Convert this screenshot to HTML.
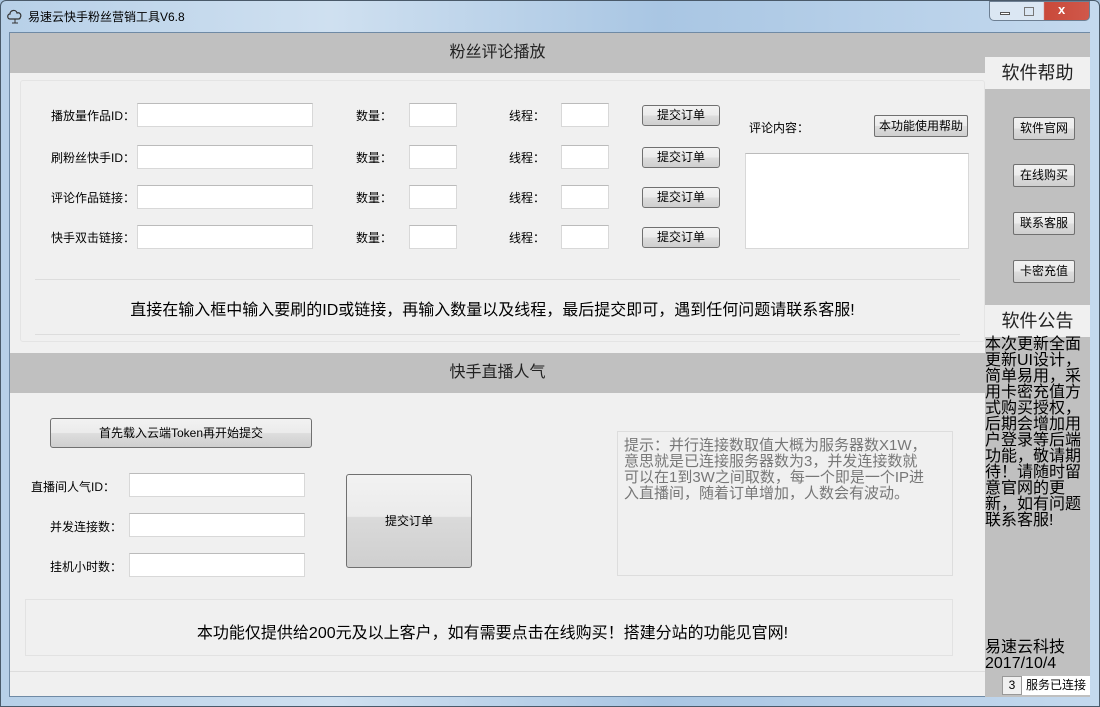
<!DOCTYPE html>
<html><head><meta charset="utf-8"><style>
*{margin:0;padding:0;box-sizing:border-box}
body{width:1100px;height:707px;overflow:hidden;background:#a9c4df;font-family:"Liberation Sans","Noto Sans CJK SC","WenQuanYi Zen Hei",sans-serif;font-size:12px;color:#000;position:relative}
.a{position:absolute}
.frame{left:0;top:0;width:1100px;height:707px;background:linear-gradient(90deg,#b7d0e8,#cfe0f0 30%,#a9c6e3 60%,#c4d9ee);border:1px solid #4a5a6a;border-radius:6px 6px 0 0}
.client{left:9px;top:32px;width:1081px;height:665px;background:#f0f0f0;border:1px solid #6f8aa5}
.band{background:#c0c0c0;text-align:center;font-size:16px;color:#222}
.inp{background:#fff;border:1px solid #d8d8d8;border-top-color:#bbb}
.btn{border:1px solid #707070;border-radius:3px;background:linear-gradient(#f2f2f2 0,#ebebeb 50%,#dddddd 51%,#cfcfcf 100%);text-align:center;font-size:12px}
.lbl{font-size:12px;text-align:right}
.sb{background:#c0c0c0}
.wh{background:#f0f0f0;font-size:18px;text-align:center;color:#222}
</style></head><body>
<div class="a frame"></div>
<svg class="a" style="left:6px;top:8px" width="18" height="16" viewBox="0 0 18 16"><path d="M4 11 C1 11 1 6 4 6 C4 2 10 1 11 5 C14 4 16 7 14 10 C14 11 13 11 12 11 Z" fill="none" stroke="#333" stroke-width="1.2"/><path d="M9 11 V15 M6 15 H12" stroke="#333"/></svg>
<div class="a" style="left:28px;top:8px;font-size:12px">易速云快手粉丝营销工具V6.8</div>
<div class="a" style="left:989px;top:1px;width:101px;height:20px;border:1px solid #6d7f93;border-radius:0 0 5px 5px;background:linear-gradient(90deg,#dbe7f3 0,#dbe7f3 54%,#c9493a 55%,#d0584a 100%);overflow:hidden">
<div class="a" style="left:10px;top:10px;width:10px;height:3px;border:1px solid #555;background:#fff"></div>
<div class="a" style="left:34px;top:5px;width:10px;height:9px;border:1px solid #777"></div>
<div class="a" style="left:68px;top:0;color:#fff;font-weight:bold;font-size:13px">x</div>
</div>
<div class="a client"></div>
<div class="a band" style="left:10px;top:33px;width:975px;height:40px;line-height:40px">粉丝评论播放</div>
<div class="a" style="left:20px;top:80px;width:965px;height:262px;border:1px solid #e4e4e4;border-radius:3px"></div>
<div class="a lbl" style="left:30px;top:107px;width:105px">播放量作品ID：</div>
<div class="a lbl" style="left:30px;top:149px;width:105px">刷粉丝快手ID：</div>
<div class="a lbl" style="left:30px;top:189px;width:105px">评论作品链接：</div>
<div class="a lbl" style="left:30px;top:229px;width:105px">快手双击链接：</div>
<div class="a inp" style="left:137px;top:103px;width:176px;height:24px"></div>
<div class="a inp" style="left:137px;top:145px;width:176px;height:24px"></div>
<div class="a inp" style="left:137px;top:185px;width:176px;height:24px"></div>
<div class="a inp" style="left:137px;top:225px;width:176px;height:24px"></div>
<div class="a" style="left:356px;top:107px">数量：</div><div class="a" style="left:356px;top:149px">数量：</div><div class="a" style="left:356px;top:189px">数量：</div><div class="a" style="left:356px;top:229px">数量：</div>
<div class="a inp" style="left:409px;top:103px;width:48px;height:24px"></div><div class="a inp" style="left:409px;top:145px;width:48px;height:24px"></div><div class="a inp" style="left:409px;top:185px;width:48px;height:24px"></div><div class="a inp" style="left:409px;top:225px;width:48px;height:24px"></div>
<div class="a" style="left:509px;top:107px">线程：</div><div class="a" style="left:509px;top:149px">线程：</div><div class="a" style="left:509px;top:189px">线程：</div><div class="a" style="left:509px;top:229px">线程：</div>
<div class="a inp" style="left:561px;top:103px;width:48px;height:24px"></div><div class="a inp" style="left:561px;top:145px;width:48px;height:24px"></div><div class="a inp" style="left:561px;top:185px;width:48px;height:24px"></div><div class="a inp" style="left:561px;top:225px;width:48px;height:24px"></div>
<div class="a btn" style="left:642px;top:105px;width:78px;height:21px;line-height:19px">提交订单</div>
<div class="a btn" style="left:642px;top:147px;width:78px;height:21px;line-height:19px">提交订单</div>
<div class="a btn" style="left:642px;top:187px;width:78px;height:21px;line-height:19px">提交订单</div>
<div class="a btn" style="left:642px;top:227px;width:78px;height:21px;line-height:19px">提交订单</div>
<div class="a" style="left:749px;top:119px">评论内容：</div>
<div class="a btn" style="left:874px;top:115px;width:94px;height:22px;line-height:20px;border-radius:2px">本功能使用帮助</div>
<div class="a inp" style="left:745px;top:153px;width:224px;height:96px"></div>
<div class="a" style="left:35px;top:279px;width:925px;height:56px;border-top:1px solid #ddd;border-bottom:1px solid #ddd"></div>
<div class="a" style="left:10px;top:296px;width:965px;text-align:center;font-size:16px">直接在输入框中输入要刷的ID或链接，再输入数量以及线程，最后提交即可，遇到任何问题请联系客服!</div>
<div class="a band" style="left:10px;top:353px;width:975px;height:40px;line-height:40px">快手直播人气</div>
<div class="a btn" style="left:50px;top:418px;width:262px;height:30px;line-height:28px">首先载入云端Token再开始提交</div>
<div class="a lbl" style="left:20px;top:478px;width:95px">直播间人气ID：</div>
<div class="a lbl" style="left:20px;top:518px;width:102px">并发连接数：</div>
<div class="a lbl" style="left:20px;top:558px;width:102px">挂机小时数：</div>
<div class="a inp" style="left:129px;top:473px;width:176px;height:24px"></div>
<div class="a inp" style="left:129px;top:513px;width:176px;height:24px"></div>
<div class="a inp" style="left:129px;top:553px;width:176px;height:24px"></div>
<div class="a btn" style="left:346px;top:474px;width:126px;height:94px;line-height:92px;background:linear-gradient(#f2f2f2 0,#ebebeb 45%,#dadada 46%,#cfcfcf 100%)">提交订单</div>
<div class="a" style="left:617px;top:431px;width:336px;height:145px;border:1px solid #ddd"></div>
<div class="a" style="left:624px;top:438px;color:#777;font-size:15px;line-height:16px;white-space:nowrap">提示：并行连接数取值大概为服务器数X1W，<br>意思就是已连接服务器数为3，并发连接数就<br>可以在1到3W之间取数，每一个即是一个IP进<br>入直播间，随着订单增加，人数会有波动。</div>
<div class="a" style="left:25px;top:599px;width:928px;height:57px;border:1px solid #e2e2e2"></div>
<div class="a" style="left:10px;top:619px;width:965px;text-align:center;font-size:16px">本功能仅提供给200元及以上客户，如有需要点击在线购买！搭建分站的功能见官网!</div>
<div class="a" style="left:10px;top:671px;width:975px;border-top:1px solid #ddd"></div>
<div class="a sb" style="left:985px;top:33px;width:105px;height:664px"></div>
<div class="a wh" style="left:985px;top:57px;width:105px;height:32px;line-height:32px">软件帮助</div>
<div class="a btn" style="left:1013px;top:117px;width:62px;height:23px;line-height:21px;border-radius:2px">软件官网</div>
<div class="a btn" style="left:1013px;top:164px;width:62px;height:23px;line-height:21px;border-radius:2px">在线购买</div>
<div class="a btn" style="left:1013px;top:212px;width:62px;height:23px;line-height:21px;border-radius:2px">联系客服</div>
<div class="a btn" style="left:1013px;top:260px;width:62px;height:23px;line-height:21px;border-radius:2px">卡密充值</div>
<div class="a wh" style="left:985px;top:305px;width:105px;height:32px;line-height:32px">软件公告</div>
<div class="a" style="left:985px;top:337px;width:98px;font-size:16px;line-height:16px;word-break:break-all">本次更新全面更新UI设计，简单易用，采用卡密充值方式购买授权，后期会增加用户登录等后端功能，敬请期待！请随时留意官网的更新，如有问题联系客服!</div>
<div class="a" style="left:985px;top:640px;font-size:16px;line-height:16px">易速云科技<br>2017/10/4</div>
<div class="a" style="left:1002px;top:676px;width:20px;height:19px;background:#f0f0f0;border:1px solid #999;text-align:center;line-height:17px">3</div>
<div class="a" style="left:1022px;top:676px;width:68px;height:19px;background:#fff;line-height:19px;text-align:center">服务已连接</div>
</body></html>
